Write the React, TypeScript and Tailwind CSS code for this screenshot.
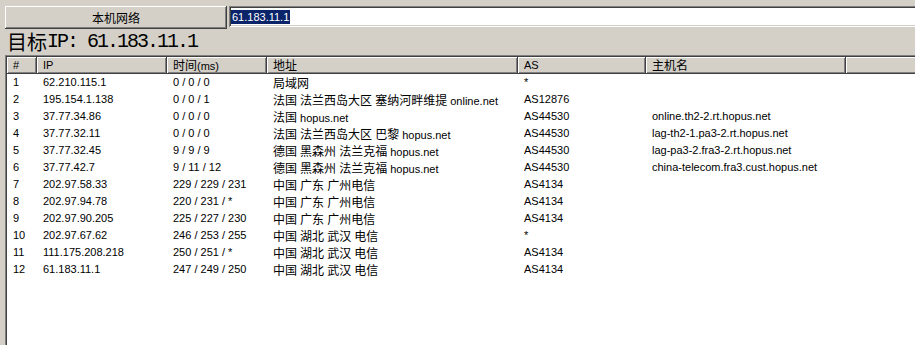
const rows = [
  ["1", "62.210.115.1", "0 / 0 / 0", "局域网", "*", ""],
  ["2", "195.154.1.138", "0 / 0 / 1", "法国 法兰西岛大区 塞纳河畔维提 online.net", "AS12876", ""],
  ["3", "37.77.34.86", "0 / 0 / 0", "法国 hopus.net", "AS44530", "online.th2-2.rt.hopus.net"],
  ["4", "37.77.32.11", "0 / 0 / 0", "法国 法兰西岛大区 巴黎 hopus.net", "AS44530", "lag-th2-1.pa3-2.rt.hopus.net"],
  ["5", "37.77.32.45", "9 / 9 / 9", "德国 黑森州 法兰克福 hopus.net", "AS44530", "lag-pa3-2.fra3-2.rt.hopus.net"],
  ["6", "37.77.42.7", "9 / 11 / 12", "德国 黑森州 法兰克福 hopus.net", "AS44530", "china-telecom.fra3.cust.hopus.net"],
  ["7", "202.97.58.33", "229 / 229 / 231", "中国 广东 广州电信", "AS4134", ""],
  ["8", "202.97.94.78", "220 / 231 / *", "中国 广东 广州电信", "AS4134", ""],
  ["9", "202.97.90.205", "225 / 227 / 230", "中国 广东 广州电信", "AS4134", ""],
  ["10", "202.97.67.62", "246 / 253 / 255", "中国 湖北 武汉 电信", "*", ""],
  ["11", "111.175.208.218", "250 / 251 / *", "中国 湖北 武汉 电信", "AS4134", ""],
  ["12", "61.183.11.1", "247 / 249 / 250", "中国 湖北 武汉 电信", "AS4134", ""],
];

const headers = ["#", "IP", "时间(ms)", "地址", "AS", "主机名", ""];

// CJK runs get the 12px bitmap-ish size, latin stays at 11px
function Txt({ s }: { s: string }) {
  const parts = s.split(/([\u3000-\u9fff\uff00-\uffef]+)/);
  return (
    <>
      {parts.map((p, i) =>
        /[\u3000-\u9fff\uff00-\uffef]/.test(p) ? (
          <span key={i} className="text-[12px] font-['Noto_Sans_CJK_SC',sans-serif]">
            {p}
          </span>
        ) : (
          <span key={i}>{p}</span>
        )
      )}
    </>
  );
}

const cols = "grid grid-cols-[30px_130px_100px_251px_128px_200px_1fr]";
const raised = "shadow-[inset_-1px_-1px_#404040,inset_1px_1px_#ffffff,inset_-2px_-2px_#808080]";
const sunken = "shadow-[inset_1px_1px_#808080,inset_-1px_-1px_#ffffff,inset_2px_2px_#404040,inset_-2px_-2px_#d4d0c8]";

function App() {
  return (
    <div className="w-[915px] h-[345px] overflow-hidden bg-[#d4d0c8] text-black text-[11px] font-['Liberation_Sans','Noto_Sans_CJK_SC',sans-serif]">
      <div className="flex gap-[2px] pt-[6px] pl-[5px] h-[29px]">
        <button className={`w-[222px] h-[23px] bg-[#d4d0c8] ${raised} flex items-center justify-center`}>
          <Txt s="本机网络" />
        </button>
        <div className={`flex-1 -mr-[10px] h-[21px] bg-white ${sunken} pl-[2px] pt-[3px]`}>
          <span className="inline-block h-[14px] leading-[14px] px-[1px] bg-[#0a246a] text-white">
            61.183.11.1
          </span>
        </div>
      </div>

      <div className="h-[26px] pl-[7px] flex items-center whitespace-pre">
        <span className="text-[20px] leading-[26px] font-['Noto_Sans_CJK_SC',sans-serif]">目标</span>
        <span className="text-[20px] leading-[26px] tracking-[-2px] font-['Liberation_Mono',monospace]">
          IP: 61.183.11.1
        </span>
      </div>

      <div className={`ml-[5px] -mr-[10px] h-[300px] bg-white ${sunken} p-[2px]`}>
        <div className={`${cols} h-[17px] bg-[#d4d0c8]`}>
          {headers.map((h, i) => (
            <div key={i} className={`${raised} pl-[6px] leading-[16px] whitespace-nowrap overflow-hidden`}>
              <Txt s={h} />
            </div>
          ))}
        </div>
        {rows.map((r) => (
          <div key={r[0]} className={`${cols} h-[17px] leading-[17px]`}>
            {r.map((c, i) => (
              <div key={i} className="pl-[6px] whitespace-nowrap overflow-hidden">
                <Txt s={c} />
              </div>
            ))}
            <div />
          </div>
        ))}
      </div>
    </div>
  );
}

export default App;
